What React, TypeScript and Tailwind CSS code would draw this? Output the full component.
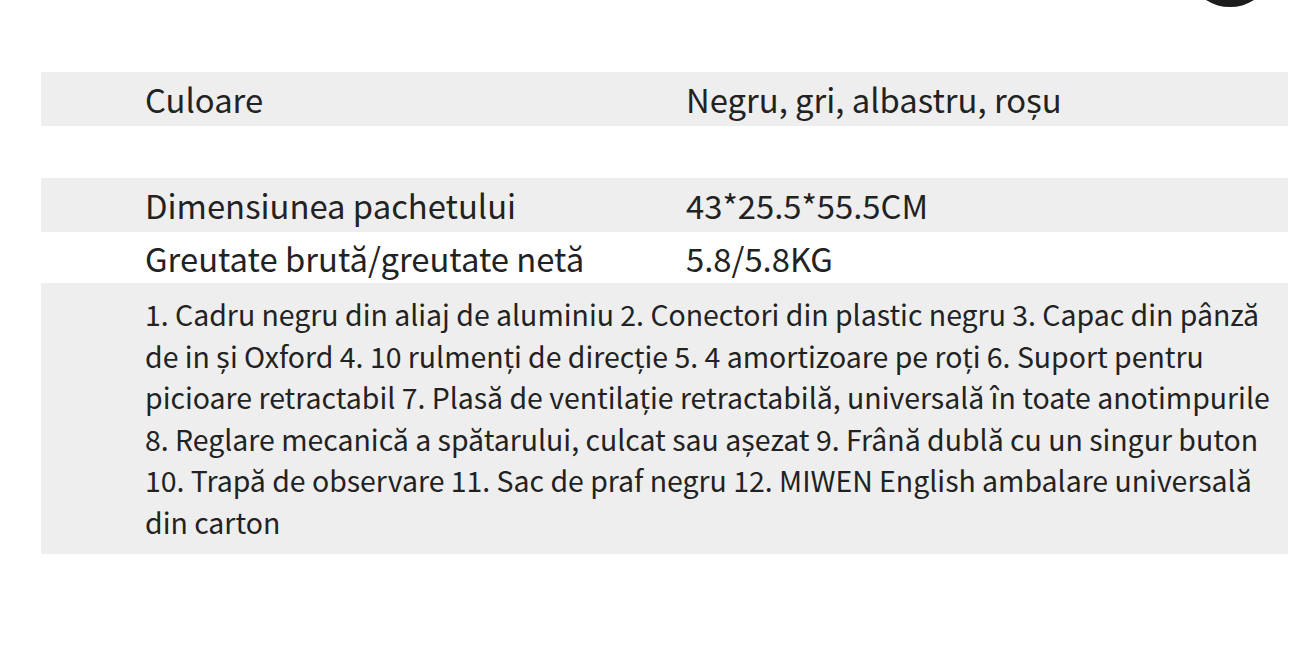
export default function App() {
  const font = { fontFamily: '"Noto Sans CJK SC", "Noto Sans", sans-serif' };

  return (
    <div className="relative h-[646px] w-[1316px] overflow-hidden bg-white text-[#222222]" style={font}>
      {/* dark shape peeking in at the top */}
      <svg className="absolute left-[1190px] top-0" width="80" height="12" viewBox="0 0 80 12">
        <ellipse cx="40" cy="-14" rx="32" ry="21" fill="#1c1c1c" />
      </svg>

      <div className="ml-[41px] w-[1247px] pt-[72px]">
        <div className="flex h-[54px] items-center bg-[#eeeeee] text-[32.8px]">
          <div className="w-[645px] pl-[104px]">Culoare</div>
          <div>Negru, gri, albastru, roșu</div>
        </div>

        <div className="h-[52px]" />

        <div className="flex h-[54px] items-center bg-[#eeeeee] text-[32.8px]">
          <div className="w-[645px] pl-[104px]">Dimensiunea pachetului</div>
          <div>43*25.5*55.5CM</div>
        </div>
        <div className="flex h-[51px] items-center text-[32.8px]">
          <div className="w-[645px] pl-[104px]">Greutate brută/greutate netă</div>
          <div>5.8/5.8KG</div>
        </div>

        <div className="bg-[#eeeeee] pb-[12px] pl-[104px] pr-[8px] pt-[10px] text-[28.45px] leading-[41.5px]">
          1. Cadru negru din aliaj de aluminiu 2. Conectori din plastic negru 3. Capac din pânză de in și Oxford 4. 10
          rulmenți de direcție 5. 4 amortizoare pe roți 6. Suport pentru picioare retractabil 7. Plasă de ventilație
          retractabilă, universală în toate anotimpurile 8. Reglare mecanică a spătarului, culcat sau așezat 9. Frână
          dublă cu un singur buton 10. Trapă de observare 11. Sac de praf negru 12. MIWEN English ambalare universală din
          carton
        </div>
      </div>
    </div>
  );
}
